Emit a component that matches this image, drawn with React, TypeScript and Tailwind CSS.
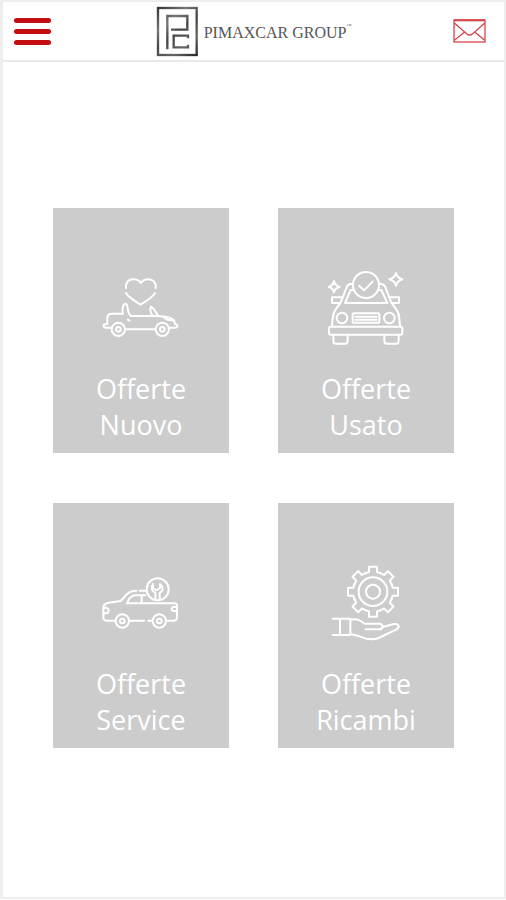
import React from "react";

type IconProps = { viewBox: string; children: React.ReactNode };

function TileIcon({ viewBox, children }: IconProps) {
  return (
    <svg
      className="h-[90px] w-[90px]"
      viewBox={viewBox}
      fill="none"
      stroke="currentColor"
      strokeWidth="6"
      strokeLinecap="round"
      strokeLinejoin="round"
      aria-hidden="true"
    >
      {children}
    </svg>
  );
}

function NewCarIcon() {
  return (
    <TileIcon viewBox="3 0 270 270">
      <path d="M93 69C91 51 103 42 116 43C126 43 133 48 138 54C143 47 150 43 160 43C174 43 184 53 182 69" />
      <path d="M93 84C101 98 120 108 137 119C154 108 172 98 180 84" />
      <path d="M50 188H34C23 188 23 177 34 177H37V157C38 149 42 146 50 146H84C80 133 83 117 92 116C100 118 96 133 102 145L107 153H188L211 155C229 157 239 164 240 177C250 178 249 188 240 188H223" />
      <path d="M91 193H180M190 153C182 142 179 132 168 125C163 132 167 143 173 153M98 164L103 167M206 155C211 166 223 165 237 166" />
      <circle cx="70" cy="193" r="20" />
      <circle cx="70" cy="193" r="7" />
      <circle cx="202" cy="193" r="20" />
      <circle cx="202" cy="193" r="7" />
    </TileIcon>
  );
}

function UsedCarIcon() {
  return (
    <TileIcon viewBox="3 0 270 270">
      <circle cx="138" cy="60" r="39" />
      <path d="M117 62L132 76L158 50" />
      <path d="M98 57H91C84 58 81 62 79 69L62 113L47 133C39 143 38 155 36 183M178 57H184C191 58 195 62 197 69L214 113L229 133C237 143 238 155 240 183" />
      <path d="M103 75H92L75 114H202L184 75H174" />
      <path d="M67 97H36V114H58M208 97H237V114H218" />
      <rect x="27" y="185" width="220" height="24" rx="5" />
      <path d="M40 210V228C40 234 42 236 47 236H76C81 236 83 233 83 228V210M193 210V228C193 234 196 236 201 236H229C234 236 236 233 236 228V210" />
      <circle cx="66" cy="159" r="16" />
      <circle cx="208" cy="159" r="16" />
      <rect x="98" y="145" width="80" height="28" rx="3" />
      <path d="M106 155H170M106 164H170" />
      <path d="M42 48Q45 62 59 66Q45 69 42 82Q39 69 26 66Q39 62 42 48ZM228 24Q232 39 247 43Q232 47 228 62Q224 47 208 43Q224 39 228 24Z" />
    </TileIcon>
  );
}

function ServiceIcon() {
  return (
    <TileIcon viewBox="3 -15 270 270">
      <path d="M58 167H34C27 167 25 163 25 157V128C25 119 31 115 41 113L77 108L95 88C103 80 111 77 124 77M134 77H151" />
      <path d="M96 115H239C244 115 246 117 246 122V157C246 164 243 167 237 167H217M105 167H147M160 167H170" />
      <path d="M96 115C101 101 109 91 122 91H151M140 92V115" />
      <path d="M27 128H34C42 132 44 139 36 145H27M245 126H235C228 129 228 135 234 138H245" />
      <circle cx="82" cy="168" r="20" />
      <circle cx="82" cy="168" r="7" />
      <circle cx="193" cy="168" r="20" />
      <circle cx="193" cy="168" r="7" />
      <circle cx="188" cy="73" r="33" />
      <path d="M181 103V84C170 79 167 67 174 57V69L184 76L195 69V57C206 66 205 78 194 84V103" />
    </TileIcon>
  );
}

const gearTeeth = [0, 45, 90, 135, 180, 225, 270, 315];

function PartsIcon() {
  return (
    <TileIcon viewBox="3 15 270 270">
      <g transform="translate(159 110)">
        {gearTeeth.map((angle) => (
          <path
            key={angle}
            transform={`rotate(${angle})`}
            d="M-24 -55L-12 -59V-75H12V-59L24 -55"
          />
        ))}
        <circle r="43" />
        <circle r="21" />
      </g>
      <path d="M38 191H91M38 240H91M60 191V240M91 191V240" />
      <path d="M91 194C108 190 122 195 133 206H178C191 207 190 223 178 223H137M188 216L222 207C237 205 240 216 230 223L176 249C155 258 137 252 119 244L91 237" />
    </TileIcon>
  );
}

const offers = [
  { kind: "Nuovo", Icon: NewCarIcon },
  { kind: "Usato", Icon: UsedCarIcon },
  { kind: "Service", Icon: ServiceIcon },
  { kind: "Ricambi", Icon: PartsIcon },
];

function Header() {
  return (
    <header className="grid h-[60px] grid-cols-[1fr_auto_1fr] items-center border-b-2 border-[#e9e9eb] px-[11px]">
      <button type="button" aria-label="Menu" className="flex w-[37px] flex-col gap-[6px]">
        <span className="h-[5px] rounded-full bg-[#c40d10]" />
        <span className="h-[5px] rounded-full bg-[#c40d10]" />
        <span className="h-[5px] rounded-full bg-[#c40d10]" />
      </button>
      <a href="#home" className="flex items-center gap-[6px] text-[#555555]">
        <svg className="h-[51px] w-[42px]" viewBox="33 15 126 153" fill="none" aria-hidden="true">
          <defs>
            <linearGradient id="frame" gradientUnits="userSpaceOnUse" x1="36" y1="18" x2="158" y2="166">
              <stop offset="0" stopColor="#333333" />
              <stop offset="0.3" stopColor="#777777" />
              <stop offset="0.5" stopColor="#444444" />
              <stop offset="0.75" stopColor="#666666" />
              <stop offset="1" stopColor="#222222" />
            </linearGradient>
          </defs>
          <g stroke="url(#frame)" strokeWidth="7">
            <rect x="39" y="21" width="116" height="141" />
            <path d="M67 145V45H127V86H78" />
            <path d="M129 112V104H86V139H129V131" />
          </g>
        </svg>
        <span className="flex pt-1 font-['Liberation_Serif',serif] text-[16px] leading-5 whitespace-nowrap">
          PIMAXCAR GROUP
          <span className="text-[5px] leading-[6px]">™</span>
        </span>
      </a>
      <button type="button" aria-label="Contatti" className="justify-self-end pr-[7px]">
        <svg
          className="h-[24px] w-[33px]"
          viewBox="0 0 99 72"
          fill="none"
          stroke="#d5474b"
          strokeWidth="4"
          aria-hidden="true"
        >
          <rect x="3" y="3" width="93" height="66" />
          <path d="M3 4H96" strokeWidth="6" />
          <path d="M4 12L41 44Q50 52 59 44L95 12M4 64L34 40M95 64L66 40" />
        </svg>
      </button>
    </header>
  );
}

export default function App() {
  return (
    <div className="flex min-h-screen flex-col bg-white pb-px">
      <div className="flex-1 border-2 border-l-[3px] border-[#eeeeee]">
        <Header />
        <main className="grid grid-cols-2 gap-x-[49px] gap-y-[50px] px-[50px] pt-[146px] pb-[50px]">
          {offers.map(({ kind, Icon }) => (
            <a
              key={kind}
              href={`#${kind.toLowerCase()}`}
              className="flex flex-col items-center bg-[#cccccc] pt-[57px] pb-[10px] text-white"
            >
              <Icon />
              <span className="mt-4 text-center font-['Open_Sans',sans-serif] text-[27px] leading-9">
                Offerte
                <br />
                {kind}
              </span>
            </a>
          ))}
        </main>
      </div>
    </div>
  );
}
